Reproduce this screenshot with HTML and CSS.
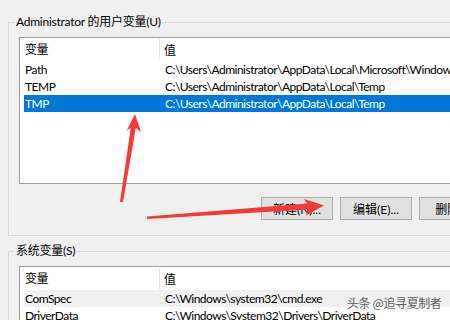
FILE: index.html
```html
<!DOCTYPE html>
<html lang="zh-CN">
<head>
  <meta charset="UTF-8">
  <title>环境变量</title>
  <link rel="stylesheet" href="styles.css">
</head>
<body>

  <div class="dialog">
    <fieldset class="group">
      <legend>Administrator 的用户变量(U)</legend>
      <div class="list user-list">
        <div class="row head"><span class="name">变量</span><span class="value">值</span></div>
        <div class="row"><span class="name">Path</span><span class="value">C:\Users\Administrator\AppData\Local\Microsoft\WindowsApps;</span></div>
        <div class="row"><span class="name">TEMP</span><span class="value">C:\Users\Administrator\AppData\Local\Temp</span></div>
        <div class="row selected"><span class="name">TMP</span><span class="value">C:\Users\Administrator\AppData\Local\Temp</span></div>
      </div>
      <div class="buttons">
        <button>新建(N)...</button>
        <button>编辑(E)...</button>
        <button>删除(D)</button>
      </div>
    </fieldset>

    <fieldset class="group">
      <legend>系统变量(S)</legend>
      <div class="list system-list">
        <div class="row head"><span class="name">变量</span><span class="value">值</span></div>
        <div class="row inactive"><span class="name">ComSpec</span><span class="value">C:\Windows\system32\cmd.exe</span></div>
        <div class="row"><span class="name">DriverData</span><span class="value">C:\Windows\System32\Drivers\DriverData</span></div>
      </div>
    </fieldset>
  </div>

  <!-- red annotation arrows drawn over the dialog -->
  <svg class="arrows" width="450" height="320" viewBox="0 0 450 320">
    <polygon points="120,202 130.8,127.5 126.5,131 135,114 141,132 135.8,128 123,202" />
    <polygon points="147,216.5 307,203.5 304,199 324,205.5 306,215.5 308,209.5 147,219" />
  </svg>

  <div class="watermark">头条 @追寻夏制者</div>

</body>
</html>
```

FILE: styles.css
```css
body {
  margin: 0;
  background-color: #f0f0f0;
  color: #000;
  font-family: Lato, "Noto Sans CJK SC", sans-serif;
  font-size: 12px;
  overflow: hidden;
  position: relative;
  width: 450px;
  height: 320px;
}

.dialog {
  width: 640px;
  padding: 14px 0 0 8px;
}

.group {
  margin: 0;
  padding: 7px 0 15px 5px;
  border: 1px solid #d9d9d9;
  min-width: 0;
}

.group + .group {
  margin-top: 7px;
}

.group legend {
  padding: 0 2px;
  line-height: 16px;
  letter-spacing: -0.25px;
  color: #000;
}

.list {
  margin-left: 5px;
  background-color: #fff;
  border: 1px solid #a0a0a0;
  letter-spacing: -0.5px;
}

.user-list {
  height: 145px;
}

.system-list {
  height: 120px;
}

.row {
  display: flex;
  align-items: center;
  height: 17px;
  margin-left: 4px;
  white-space: nowrap;
}

.row .name {
  width: 135px;
  padding-left: 1px;
}

.row .value {
  padding-left: 5px;
}

.row.head {
  height: 23px;
  margin-left: 0;
}

.row.head .name {
  width: 134px;
  padding-left: 5px;
  line-height: 21px;
  border-right: 1px solid #e5e5e5;
}

.row.head .value {
  padding-left: 4px;
}

.row.selected {
  background-color: #0078d7;
  color: #fff;
}

.row.inactive {
  background-color: #f0f0f0;
}

.buttons {
  display: flex;
  gap: 7px;
  margin-top: 13px;
  padding-left: 247px;
}

.buttons button {
  width: 72px;
  height: 23px;
  padding: 0;
  background-color: #e1e1e1;
  border: 1px solid #adadad;
  font-family: inherit;
  font-size: 12px;
  color: #000;
}

.arrows {
  position: absolute;
  left: 0;
  top: 0;
}

.arrows polygon {
  fill: #f23a3a;
}

.watermark {
  position: absolute;
  left: 347px;
  top: 294px;
  font-family: "Noto Sans CJK SC", sans-serif;
  font-size: 12px;
  letter-spacing: -0.4px;
  color: #5e5e5e;
  white-space: nowrap;
}
```
